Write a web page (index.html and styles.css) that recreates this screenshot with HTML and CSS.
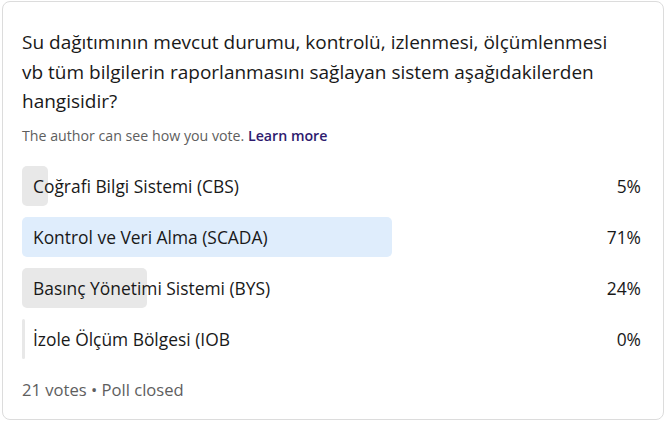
FILE: index.html
```html
<!DOCTYPE html>
<html lang="tr">
<head>
<meta charset="utf-8">
<link rel="stylesheet" href="styles.css">
</head>
<body>
<div class="card">
  <h1 class="question">Su dağıtımının mevcut durumu, kontrolü, izlenmesi, ölçümlenmesi vb tüm bilgilerin raporlanmasını sağlayan sistem aşağıdakilerden hangisidir?</h1>
  <p class="note">The author can see how you vote. <a class="learn" href="#">Learn more</a></p>
  <div class="options">
    <div class="option">
      <div class="track"><div class="fill" style="width:5%"></div></div>
      <span class="label">Coğrafi Bilgi Sistemi (CBS)</span>
      <span class="pct">5%</span>
    </div>
    <div class="option">
      <div class="track"><div class="fill chosen" style="width:71%"></div></div>
      <span class="label">Kontrol ve Veri Alma (SCADA)</span>
      <span class="pct">71%</span>
    </div>
    <div class="option">
      <div class="track"><div class="fill" style="width:24%"></div></div>
      <span class="label">Basınç Yönetimi Sistemi (BYS)</span>
      <span class="pct">24%</span>
    </div>
    <div class="option">
      <div class="track"><div class="fill empty" style="width:0%"></div></div>
      <span class="label">İzole Ölçüm Bölgesi (IOB</span>
      <span class="pct">0%</span>
    </div>
  </div>
  <p class="footer">21 votes • Poll closed</p>
</div>
</body>
</html>
```
FILE: styles.css
```css
html, body {
  margin: 0;
  padding: 0;
  background: #ffffff;
}
body {
  font-family: "Open Sans", "Noto Sans", sans-serif;
  color: #191919;
}
.card {
  box-sizing: border-box;
  margin: 1px 1px 0 2px;
  height: 419px;
  border: 1px solid #dcdcdc;
  border-radius: 8px;
  padding: 26px 20px 0 19px;
}
.question {
  margin: 0;
  max-width: 600px;
  font-size: 19px;
  font-weight: 400;
  line-height: 29.5px;
  color: #191919;
}
.note {
  margin: 9px 0 0;
  font-size: 14.2px;
  line-height: 20px;
  color: #5e5e5e;
}
.learn {
  color: #2e1a6e;
  font-weight: 600;
  text-decoration: none;
}
.options {
  margin-top: 20px;
  display: flex;
  flex-direction: column;
  gap: 11px;
}
.option {
  position: relative;
  height: 40px;
  display: flex;
  align-items: center;
  justify-content: space-between;
  padding: 0 2px 0 11px;
  font-size: 17.4px;
}
.track {
  position: absolute;
  left: 0;
  top: 0;
  bottom: 0;
  width: 521px;
}
.fill {
  height: 100%;
  min-width: 3px;
  background: #e8e8e8;
  border-radius: 5px;
}
.fill.chosen {
  background: #dfedfc;
}
.fill.empty {
  background: #e8e8e8;
  border-radius: 2px;
}
.label, .pct {
  position: relative;
  color: #191919;
}
.footer {
  margin: 20px 0 0;
  font-size: 16.6px;
  line-height: 22px;
  color: #5e5e5e;
}
```
